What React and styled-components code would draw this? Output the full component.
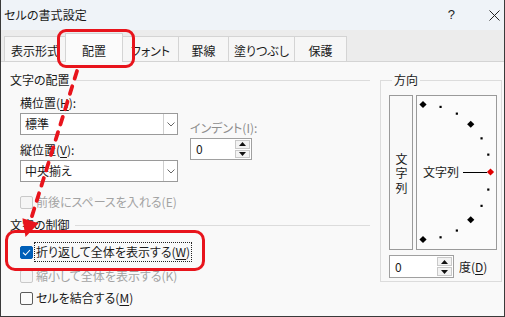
import React from 'react';
import styled, { createGlobalStyle } from 'styled-components';

const FONT = `"Noto Sans CJK JP", "Noto Sans", sans-serif`;

const Global = createGlobalStyle`
  html, body { margin: 0; padding: 0; background: #fff; }
  body { font-family: ${FONT}; font-feature-settings: "palt"; }
  * { box-sizing: border-box; }
`;

const Window = styled.div`
  position: relative;
  width: 505px;
  height: 317px;
  border-left: 1px solid #3a3a3a;
  border-right: 1px solid #3a3a3a;
  border-bottom: 1px solid #3a3a3a;
  display: flex;
  flex-direction: column;
  font-size: 12px;
  line-height: 16px;
  color: #1a1a1a;
  overflow: hidden;
`;

const TitleBar = styled.div`
  height: 30px;
  flex: none;
  display: flex;
  align-items: center;
  padding-left: 3px;
  background: #eff3f8;
`;

const TitleText = styled.div`
  font-size: 12px;
  letter-spacing: 0.1px;
`;

const TitleButtons = styled.div`
  margin-left: auto;
  display: flex;
  align-items: center;
  gap: 34px;
  padding-right: 4px;
`;

const HelpButton = styled.span`
  font-family: "Liberation Sans", sans-serif;
  font-size: 13px;
  color: #222;
`;

const CloseIcon = () => (
  <svg width="11" height="11" viewBox="0 0 11 11">
    <path d="M0.5 0.5 L10.5 10.5 M10.5 0.5 L0.5 10.5" stroke="#222" strokeWidth="1" />
  </svg>
);

const TabStrip = styled.div`
  height: 32px;
  flex: none;
  display: flex;
  align-items: flex-end;
  padding-left: 4px;
  background: #ececec;
  border-bottom: 1px solid #d4d4d4;
`;

const Tab = styled.div`
  width: ${(p) => p.$w}px;
  height: ${(p) => (p.$active ? 29 : 25)}px;
  margin-bottom: ${(p) => (p.$active ? -1 : 0)}px;
  margin-left: -1px;
  display: flex;
  align-items: flex-end;
  justify-content: center;
  padding-bottom: ${(p) => (p.$active ? 3 : 2)}px;
  background: ${(p) => (p.$active ? '#fbfbfb' : '#f6f6f6')};
  border: 1px solid #d4d4d4;
  border-bottom: ${(p) => (p.$active ? 'none' : '0')};
  position: relative;
  z-index: ${(p) => (p.$active ? 1 : 0)};
  white-space: nowrap;
`;

const Content = styled.div`
  flex: 1;
  display: flex;
  background: #f9f9f9;
  padding-left: 9px;
`;

const LeftCol = styled.div`
  width: 360px;
  display: flex;
  flex-direction: column;
`;

const GroupHeader = styled.div`
  display: flex;
  align-items: center;
  gap: 5px;
  height: 16px;
  margin-top: ${(p) => p.$mt}px;
  &::after {
    content: '';
    flex: 1;
    height: 1px;
    background: #dcdcdc;
  }
`;

const Indented = styled.div`
  padding-left: 10px;
  display: flex;
  flex-direction: column;
`;

const FieldsBlock = styled.div`
  display: flex;
  gap: 12px;
  margin-top: 7px;
`;

const FieldCol = styled.div`
  width: ${(p) => p.$w}px;
  display: flex;
  flex-direction: column;
  padding-top: ${(p) => p.$pt || 0}px;
`;

const Label = styled.div`
  height: 16px;
  margin-top: ${(p) => p.$mt || 0}px;
  color: ${(p) => (p.$disabled ? '#8d8d8d' : '#1a1a1a')};
  white-space: nowrap;
`;

const Key = styled.span`
  text-decoration: underline;
  text-underline-offset: 2px;
`;

const SelectBox = styled.div`
  height: 22px;
  margin-top: ${(p) => p.$mt || 0}px;
  display: flex;
  align-items: stretch;
  background: #fff;
  border: 1px solid #9a9a9a;
`;

const SelectValue = styled.div`
  flex: 1;
  display: flex;
  align-items: center;
  padding-left: 4px;
`;

const SelectArrow = styled.div`
  width: 14px;
  border-left: 1px solid #cfcfcf;
  display: flex;
  align-items: center;
  justify-content: center;
`;

const Chevron = () => (
  <svg width="8" height="5" viewBox="0 0 8 5">
    <path d="M0.5 0.5 L4 4 L7.5 0.5" fill="none" stroke="#666" strokeWidth="1" />
  </svg>
);

const SpinBox = styled.div`
  width: ${(p) => p.$w}px;
  height: ${(p) => p.$h}px;
  margin-top: ${(p) => p.$mt || 0}px;
  display: flex;
  background: #fff;
  border: 1px solid #a0a0a0;
`;

const SpinValue = styled.div`
  flex: 1;
  display: flex;
  align-items: center;
  padding-left: 5px;
`;

const SpinButtons = styled.div`
  width: 15px;
  margin: 1px;
  display: flex;
  flex-direction: column;
  gap: 1px;
`;

const SpinBtn = styled.div`
  flex: 1;
  display: flex;
  align-items: center;
  justify-content: center;
  background: #f3f3f3;
  border: 1px solid #c9c9c9;
`;

const Tri = ({ up }) => (
  <svg width="7" height="4" viewBox="0 0 7 4">
    <path d={up ? 'M0 4 L3.5 0 L7 4 Z' : 'M0 0 L3.5 4 L7 0 Z'} fill="#111" />
  </svg>
);

const Spin = ({ w, h, mt }) => (
  <SpinBox $w={w} $h={h} $mt={mt}>
    <SpinValue>0</SpinValue>
    <SpinButtons>
      <SpinBtn><Tri up /></SpinBtn>
      <SpinBtn><Tri /></SpinBtn>
    </SpinButtons>
  </SpinBox>
);

const CheckRow = styled.div`
  display: flex;
  align-items: center;
  gap: 3px;
  height: 16px;
  margin-top: ${(p) => p.$mt}px;
  color: ${(p) => (p.$disabled ? '#a3a3a3' : '#1a1a1a')};
  white-space: nowrap;
`;

const Box = styled.div`
  width: 13px;
  height: 13px;
  border-radius: 2px;
  border: 1px solid ${(p) => (p.$checked ? '#005fb8' : p.$disabled ? '#c9c9c9' : '#5c5c5c')};
  background: ${(p) => (p.$checked ? '#005fb8' : p.$disabled ? '#f5f5f5' : '#fbfbfb')};
  display: flex;
  align-items: center;
  justify-content: center;
`;

const CheckLabel = styled.span`
  outline: ${(p) => (p.$focus ? '1px dotted #222' : 'none')};
  outline-offset: 1px;
`;

const Check = ({ checked, disabled, focus, mt, children }) => (
  <CheckRow $mt={mt} $disabled={disabled}>
    <Box $checked={checked} $disabled={disabled}>
      {checked && (
        <svg width="9" height="7" viewBox="0 0 9 7">
          <path d="M1 3.6 L3.4 6 L8 1" fill="none" stroke="#fff" strokeWidth="1.1" />
        </svg>
      )}
    </Box>
    <CheckLabel $focus={focus}>{children}</CheckLabel>
  </CheckRow>
);

const OrientGroup = styled.fieldset`
  width: 122px;
  height: 210px;
  margin: 10px 0 0 10px;
  padding: 7px 4px 5px 8px;
  border: 1px solid #dcdcdc;
  min-width: 0;
`;

const Legend = styled.legend`
  padding: 0 2px;
  margin-left: 3px;
  line-height: 16px;
`;

const OrientRow = styled.div`
  display: flex;
  gap: 3px;
  height: 155px;
`;

const VerticalBox = styled.div`
  width: 25px;
  border: 1px solid #9a9a9a;
  display: flex;
  align-items: center;
  justify-content: center;
  padding-top: 1px;
`;

const VerticalText = styled.span`
  writing-mode: vertical-rl;
  text-orientation: upright;
  letter-spacing: 2.5px;
  line-height: 16px;
  margin-bottom: -2.5px;
`;

const DialBox = styled.div`
  width: 81px;
  border: 1px solid #9a9a9a;
  background: #fbfbfb;
`;

const DegreeRow = styled.div`
  display: flex;
  align-items: center;
  gap: 5px;
  margin-top: 5px;
`;

const Dial = () => {
  const cx = 6;
  const cy = 76;
  const r = 67.5;
  const items = [];
  for (let a = 90; a >= -90; a -= 15) {
    const t = (a * Math.PI) / 180;
    const x = cx + r * Math.cos(t);
    const y = cy - r * Math.sin(t);
    if (a % 45 === 0) {
      const s = 3.6;
      items.push(
        <polygon
          key={a}
          points={`${x},${y - s} ${x + s},${y} ${x},${y + s} ${x - s},${y}`}
          fill={a === 0 ? '#e00000' : '#000'}
        />
      );
    } else {
      items.push(<rect key={a} x={x - 1} y={y - 1} width="2.2" height="2.2" fill="#000" />);
    }
  }
  return (
    <svg width="79" height="153" viewBox="0 0 79 153">
      <text x="6" y="80.5" fontSize="12" fill="#1a1a1a" style={{ fontFamily: FONT }}>文字列</text>
      <line x1="46" y1="76.5" x2="70" y2="76.5" stroke="#000" strokeWidth="1" />
      {items}
    </svg>
  );
};

const Annotation = styled.div`
  position: absolute;
  left: ${(p) => p.$x}px;
  top: ${(p) => p.$y}px;
  width: ${(p) => p.$w}px;
  height: ${(p) => p.$h}px;
  border: 3px solid #e8141c;
  border-radius: ${(p) => p.$r}px;
  pointer-events: none;
  z-index: 5;
`;

const ArrowLayer = styled.svg`
  position: absolute;
  left: -1px;
  top: 0;
  pointer-events: none;
  z-index: 6;
`;

const Arrow = () => {
  const x1 = 77, y1 = 71, tipX = 25.5, tipY = 237;
  const dx = tipX - x1, dy = tipY - y1;
  const len = Math.hypot(dx, dy);
  const ux = dx / len, uy = dy / len;
  const bx = tipX - ux * 17, by = tipY - uy * 17;
  const px = -uy, py = ux;
  const w = 8.5;
  return (
    <ArrowLayer width="505" height="317" viewBox="0 0 505 317">
      <line x1={x1} y1={y1} x2={bx + ux * 2} y2={by + uy * 2} stroke="#e8141c" strokeWidth="3.8"
        strokeDasharray="8 8" strokeLinecap="round" />
      <polygon points={`${tipX},${tipY} ${bx + px * w},${by + py * w} ${bx - px * w},${by - py * w}`} fill="#e8141c" />
    </ArrowLayer>
  );
};

const tabs = [
  { t: '表示形式', w: 62 },
  { t: '配置', w: 58, active: true },
  { t: 'フォント', w: 57 },
  { t: '罫線', w: 51 },
  { t: '塗りつぶし', w: 67 },
  { t: '保護', w: 53 },
];

export default function App() {
  return (
    <>
      <Global />
      <Window>
        <TitleBar>
          <TitleText>セルの書式設定</TitleText>
          <TitleButtons>
            <HelpButton>?</HelpButton>
            <CloseIcon />
          </TitleButtons>
        </TitleBar>
        <TabStrip>
          {tabs.map((tb) => (
            <Tab key={tb.t} $w={tb.w} $active={tb.active}>{tb.t}</Tab>
          ))}
        </TabStrip>
        <Content>
          <LeftCol>
            <GroupHeader $mt={10}>文字の配置</GroupHeader>
            <Indented>
              <FieldsBlock>
                <FieldCol $w={158}>
                  <Label>横位置(<Key>H</Key>):</Label>
                  <SelectBox $mt={2}>
                    <SelectValue>標準</SelectValue>
                    <SelectArrow><Chevron /></SelectArrow>
                  </SelectBox>
                  <Label $mt={7}>縦位置(<Key>V</Key>):</Label>
                  <SelectBox $mt={2}>
                    <SelectValue>中央揃え</SelectValue>
                    <SelectArrow><Chevron /></SelectArrow>
                  </SelectBox>
                </FieldCol>
                <FieldCol $w={62} $pt={25}>
                  <Label $disabled>インデント(I):</Label>
                  <Spin w={62} h={22} mt={2} />
                </FieldCol>
              </FieldsBlock>
              <Check disabled mt={12}>前後にスペースを入れる(E)</Check>
            </Indented>
            <GroupHeader $mt={7}>文字の制御</GroupHeader>
            <Indented>
              <Check checked focus mt={11}>折り返して全体を表示する(<Key>W</Key>)</Check>
              <Check disabled mt={8}>縮小して全体を表示する(K)</Check>
              <Check mt={6}>セルを結合する(<Key>M</Key>)</Check>
            </Indented>
          </LeftCol>
          <OrientGroup>
            <Legend>方向</Legend>
            <OrientRow>
              <VerticalBox>
                <VerticalText>文字列</VerticalText>
              </VerticalBox>
              <DialBox><Dial /></DialBox>
            </OrientRow>
            <DegreeRow>
              <Spin w={65} h={23} />
              <span>度(<Key>D</Key>)</span>
            </DegreeRow>
          </OrientGroup>
        </Content>
        <Annotation $x={56} $y={29} $w={78} $h={39} $r={9} />
        <Annotation $x={4} $y={230} $w={200} $h={41} $r={10} />
        <Arrow />
      </Window>
    </>
  );
}
